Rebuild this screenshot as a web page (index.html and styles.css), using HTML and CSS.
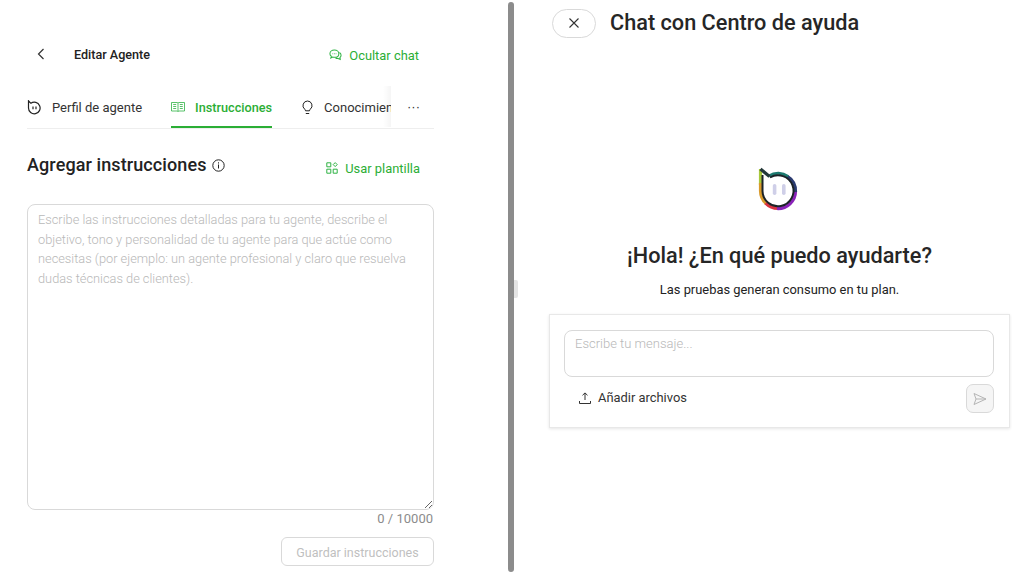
FILE: index.html
```html
<!DOCTYPE html>
<html lang="es">
<head>
  <meta charset="UTF-8" />
  <meta name="viewport" content="width=device-width, initial-scale=1" />
  <title>Editar Agente</title>
  <link rel="stylesheet" href="styles.css">
</head>
<body>
  <div class="layout">
    <section class="editor">
      <header class="editor-head">
        <div class="editor-title">
          <svg class="icon-back" width="16" height="16" viewBox="0 0 16 16"><path d="M10.5 3 5.5 8l5 5" fill="none" stroke="#333" stroke-width="1.2"/></svg>
          <span>Editar Agente</span>
        </div>
        <a class="link-green hide-chat">
          <svg width="13" height="13" viewBox="0 0 14 14" fill="none" stroke="#2fb344" stroke-width="1.100"><path d="M5.800 1c2.800 0 4.800 1.800 4.800 4s-2 4-4.800 4c-.7 0-1.300-.1-1.900-.3L2 9.700l.5-2C1.500 7 1 6 1 5c0-2.200 2-4 4.800-4z"/><path d="M11.300 3.800c1 .7 1.700 1.800 1.700 3 0 1-.5 1.900-1.200 2.500l.3 2-2.300-1.100c-1 .1-2-.1-2.800-.5"/><path d="M3.800 5h.7M5.500 5h.7M7.200 5h.7"/></svg>
          Ocultar chat
        </a>
      </header>

      <nav class="tabs">
        <div class="tabs-scroll">
          <a class="tab">
            <svg width="15" height="15" viewBox="0 0 15 15" fill="none" stroke="#222" stroke-width="1.200"><path d="M1.500.8v7.200a5.800 5.800 0 1 0 2.400-4.700L1.500.8z"/><path d="M6 6.500v2.800M9 6.500v2.800"/></svg>
            Perfil de agente
          </a>
          <a class="tab active">
            <svg width="14" height="12" viewBox="0 0 14 12" fill="none" stroke="#2fb344" stroke-width=".8"><path d="M.5 1.500H6c.5 0 1 .2 1 .6 0-.4.5-.6 1-.6h5.500v8.500H8c-.5 0-1 .2-1 .5 0-.3-.5-.5-1-.5H.5z"/><path d="M7 2.100v8.400M2.200 3.500h3M2.200 5.500h3M2.200 7.500h3M8.800 3.500h3M8.800 5.500h3M8.800 7.500h3"/></svg>
            Instrucciones
          </a>
          <a class="tab">
            <svg width="13" height="15" viewBox="0 0 13 15" fill="none" stroke="#222" stroke-width="1"><path d="M6.500 1a4.600 4.600 0 0 0-2.800 8.200c.5.400.8 1 .8 1.600h4c0-.6.300-1.200.8-1.600A4.600 4.600 0 0 0 6.500 1z"/><path d="M4.800 13.500h3.400"/></svg>
            Conocimiento
          </a>
        </div>
        <button class="tabs-more">···</button>
      </nav>

      <div class="section-head">
        <h2>Agregar instrucciones
          <svg width="13" height="13" viewBox="0 0 13 13" fill="none" stroke="#222"><circle cx="6.500" cy="6.500" r="5.700"/><path d="M6.500 5.500v4M6.500 3.300v1.200"/></svg>
        </h2>
        <a class="link-green">
          <svg width="12" height="12" viewBox="0 0 12 12" fill="none" stroke="#2fb344"><path d="M.8.800h4v4h-4zM.8 7.200h4v4h-4zM7.200 7.200h4v4h-4zM9.200.6l2 2-2 2-2-2z"/></svg>
          Usar plantilla
        </a>
      </div>

      <textarea class="instructions" placeholder="Escribe las instrucciones detalladas para tu agente, describe el objetivo, tono y personalidad de tu agente para que actúe como necesitas (por ejemplo: un agente profesional y claro que resuelva dudas técnicas de clientes)."></textarea>
      <div class="counter">0 / 10000</div>
      <div class="save-row"><button class="btn-save" disabled>Guardar instrucciones</button></div>
    </section>

    <div class="splitter"><span class="grip"></span></div>

    <section class="chat">
      <header class="chat-head">
        <button class="btn-close">
          <svg width="12" height="12" viewBox="0 0 12 12"><path d="M1.500 1.500l9 9M10.500 1.500l-9 9" stroke="#333" stroke-width="1.100"/></svg>
        </button>
        <h1>Chat con Centro de ayuda</h1>
      </header>

      <div class="chat-hello">
        <svg class="logo" width="40" height="46" viewBox="0 0 40 46" fill="none" stroke-width="3.200" stroke-linejoin="round">
          <defs>
            <filter id="soft"><feGaussianBlur stdDeviation=".5"/></filter>
          </defs>
          <g filter="url(#soft)">
            <path d="M2.500 4V20" stroke="#a8c83a"/>
            <path d="M2.500 18V26A17.500 17.500 0 0 0 8 38.500" stroke="#d89a2c"/>
            <path d="M7.600 38.200A17.500 17.500 0 0 0 20 43.500" stroke="#d8323f"/>
            <path d="M19 43.500A17.500 17.500 0 0 0 37.500 26" stroke="#8a22b8"/>
            <path d="M37.500 27A17.500 17.500 0 0 0 29 11" stroke="#2a3a70"/>
            <path d="M30 11.500A17.500 17.500 0 0 0 11 11" stroke="#1f7a70"/>
            <path d="M11.500 11.500 2.500 4" stroke="#24383a"/>
            <path d="M4.500 10V26A15.500 15.500 0 1 0 12 12.500" stroke="#1c2228" stroke-width="2"/>
            <rect x="14.800" y="19" width="3.600" height="11" rx="1.800" fill="#cfcfe8" stroke="none"/>
            <rect x="24" y="19" width="3.600" height="11" rx="1.800" fill="#cfcfe8" stroke="none"/>
          </g>
        </svg>
        <h2>¡Hola! ¿En qué puedo ayudarte?</h2>
        <p>Las pruebas generan consumo en tu plan.</p>
      </div>

      <div class="composer">
        <textarea class="message" placeholder="Escribe tu mensaje..."></textarea>
        <div class="composer-foot">
          <a class="attach">
            <svg width="12" height="12" viewBox="0 0 12 12" fill="none" stroke="#333"><path d="M6 8V1M3.500 3.300 6 .9l2.500 2.400M.5 9v2.500h11V9"/></svg>
            Añadir archivos
          </a>
          <button class="btn-send" disabled>
            <svg width="14" height="14" viewBox="0 0 14 14" fill="none" stroke="#b5b5b5"><path d="M1 1.500 13 7 1 12.500 3 7zM3 7h10"/></svg>
          </button>
        </div>
      </div>
    </section>
  </div>
</body>
</html>
```

FILE: styles.css
```css
* {
  box-sizing: border-box;
}

html, body {
  margin: 0;
  height: 100%;
  overflow: hidden;
}

body {
  font-family: Roboto, 'Liberation Sans', sans-serif;
  font-size: 13px;
  color: #222;
  background: #fff;
}

.layout {
  display: flex;
  height: 575px;
}

.editor {
  width: 508px;
  flex: none;
  padding: 45px 74px 0 27px;
}

.editor-head {
  display: flex;
  justify-content: space-between;
  align-items: center;
  height: 20px;
  margin-bottom: 21px;
}

.editor-title {
  display: flex;
  align-items: center;
  margin-top: -2px;
  font-size: 12.600px;
  font-weight: 500;
}

.icon-back {
  margin-right: 25px;
  margin-left: 6px;
}

.link-green {
  display: inline-flex;
  align-items: center;
  gap: 7px;
  font-size: 12.900px;
  color: #2bae35;
}

.hide-chat {
  margin-right: 15px;
}

.tabs {
  position: relative;
  height: 43px;
  border-bottom: 1px solid #eee;
}

.tabs-scroll {
  display: flex;
  gap: 29px;
  width: 364px;
  height: 42px;
  overflow: hidden;
}

.tab {
  display: flex;
  align-items: center;
  gap: 10px;
  flex: none;
  height: 42px;
  color: #333;
  font-size: 13px;
}

.tab.active {
  color: #2bae35;
  font-weight: 500;
  font-size: 12.700px;
  border-bottom: 2px solid #2bae35;
  padding-top: 2px;
}

.tabs-more {
  position: absolute;
  right: 0;
  top: 0;
  width: 43px;
  height: 41px;
  border: none;
  background: #fff;
  font-size: 13px;
  color: #333;
  text-align: left;
  padding: 0 0 0 16px;
}

.tabs-more::before {
  content: '';
  position: absolute;
  left: -8px;
  top: 0;
  width: 8px;
  height: 100%;
  background: linear-gradient(to right, rgba(0, 0, 0, 0), rgba(0, 0, 0, 0.04));
}

.section-head {
  display: flex;
  justify-content: space-between;
  align-items: center;
  margin-top: 22px;
  height: 26px;
  margin-bottom: 27px;
}

.section-head h2 {
  margin: 0;
  font-size: 18px;
  font-weight: 500;
  letter-spacing: 0.1px;
  display: flex;
  align-items: center;
  gap: 5px;
}

.section-head h2 svg {
  margin-top: 2px;
}

.section-head .link-green {
  margin: 8px 14px 0 0;
}

.instructions {
  display: block;
  width: 100%;
  height: 306px;
  padding: 5px 10px;
  border: 1px solid #d9d9d9;
  border-radius: 8px;
  font-family: inherit;
  font-size: 12.800px;
  font-weight: 300;
  line-height: 19.500px;
  outline: none;
}

.instructions::placeholder,
.message::placeholder {
  color: #b8b8b8;
}

.counter {
  text-align: right;
  color: #8c8c8c;
  font-size: 13px;
  line-height: 18px;
  padding-right: 1px;
}

.save-row {
  display: flex;
  justify-content: flex-end;
  margin-top: 9px;
}

.btn-save {
  width: 153px;
  height: 29px;
  border: 1px solid #d9d9d9;
  border-radius: 6px;
  background: #fff;
  color: #bfbfbf;
  font-family: inherit;
  font-size: 12.500px;
  padding: 1px 0 0;
}

.splitter {
  position: relative;
  width: 6px;
  flex: none;
  height: 570px;
  margin-top: 2px;
  background: #8c8c8c;
  border-radius: 3px;
}

.grip {
  position: absolute;
  left: 6px;
  top: 278px;
  width: 4px;
  height: 18px;
  background: #e4e4e4;
  border-radius: 0 2px 2px 0;
}

.chat {
  flex: 1;
  padding: 8px 2px 0 35px;
  min-width: 0;
}

.chat-head {
  display: flex;
  align-items: center;
  gap: 14px;
  margin-left: 3px;
}

.btn-close {
  display: flex;
  align-items: center;
  justify-content: center;
  width: 44px;
  height: 29px;
  border: 1px solid #d9d9d9;
  border-radius: 15px;
  background: #fff;
  padding: 0;
}

.chat-head h1 {
  margin: 0;
  font-size: 21.700px;
  font-weight: 500;
  line-height: 30px;
  color: #262626;
}

.chat-hello {
  display: flex;
  flex-direction: column;
  align-items: center;
  margin-top: 127px;
}

.logo {
  display: block;
  margin-left: -3px;
}

.chat-hello h2 {
  margin: 30px 0 0;
  font-size: 21.700px;
  font-weight: 500;
  line-height: 30px;
  color: #262626;
}

.chat-hello p {
  margin: 10px 0 0;
  font-size: 12.900px;
  line-height: 18px;
}

.composer {
  margin-top: 15px;
  height: 114px;
  padding: 15px 15px 0 14px;
  border: 1px solid #e8e8e8;
  box-shadow: 0 1px 3px rgba(0, 0, 0, 0.1);
  background: #fff;
}

.message {
  display: block;
  width: 100%;
  height: 47px;
  padding: 4px 10px;
  border: 1px solid #d9d9d9;
  border-radius: 8px;
  resize: none;
  outline: none;
  font-family: inherit;
  font-size: 13px;
  font-weight: 300;
  line-height: 18px;
}

.composer-foot {
  display: flex;
  justify-content: space-between;
  align-items: center;
  margin-top: 7px;
}

.attach {
  display: flex;
  align-items: center;
  gap: 7px;
  margin: -2px 0 0 15px;
  font-size: 12.900px;
  color: #333;
}

.btn-send {
  display: flex;
  align-items: center;
  justify-content: center;
  width: 28px;
  height: 29px;
  padding: 0;
  border: 1px solid #d9d9d9;
  border-radius: 7px;
  background: #f5f5f5;
}
```
